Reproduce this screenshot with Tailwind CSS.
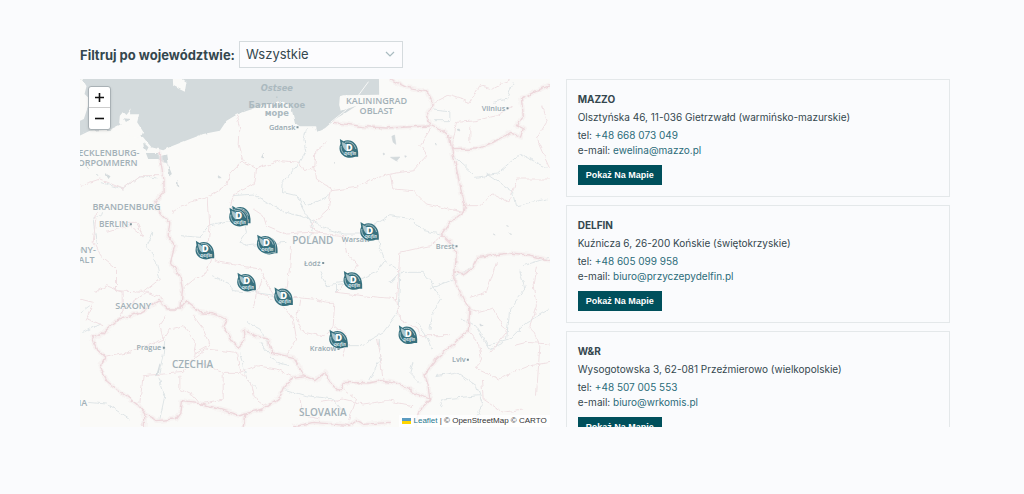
<!DOCTYPE html>
<html lang="pl">
<head>
  <meta charset="UTF-8">
  <meta name="viewport" content="width=device-width, initial-scale=1.0">
  <title>Dealerzy</title>
  <script src="https://cdn.jsdelivr.net/npm/@tailwindcss/browser@4"></script>
</head>
<body class="bg-[#fafbfd] font-[Inter,sans-serif] text-[#34474e]">
  <main class="pt-[41px] pb-16 pl-20 pr-[74px]">

    <!-- Filter -->
    <div class="flex items-center gap-1">
      <label for="region" class="text-[13px] leading-5 font-bold">Filtruj po województwie:</label>
      <div class="relative w-[164px]">
        <select id="region" class="block w-full h-[27px] appearance-none border border-[#d5dbde] bg-white/40 pl-[6px] pr-6 text-[13px]">
          <option>Wszystkie</option>
          <option>warmińsko-mazurskie</option>
          <option>świętokrzyskie</option>
          <option>wielkopolskie</option>
        </select>
        <svg class="pointer-events-none absolute right-2 top-[10px] w-[10px] h-[7px]" viewBox="0 0 10 7" fill="none" stroke="#a9bbc0" stroke-width="1.2"><path d="M1 1l4 4 4-4"/></svg>
      </div>
    </div>

    <div class="mt-[11px] grid grid-cols-[55fr_45fr] gap-4">

      <!-- Map -->
      <section class="relative h-[348px] overflow-hidden bg-[#fafaf8]">
        <svg class="absolute inset-0 w-full h-full" viewBox="0 0 1410 1044" preserveAspectRatio="xMidYMid slice" fill="none" stroke-linejoin="round">
          <defs>
            <filter id="rough" x="-5%" y="-5%" width="110%" height="110%">
              <feTurbulence type="fractalNoise" baseFrequency="0.045" numOctaves="3" seed="4"/>
              <feDisplacementMap in="SourceGraphic" scale="15" xChannelSelector="R" yChannelSelector="G"/>
            </filter>
            <filter id="coast">
              <feTurbulence type="fractalNoise" baseFrequency="0.05" numOctaves="2" seed="8"/>
              <feDisplacementMap in="SourceGraphic" scale="8" xChannelSelector="R" yChannelSelector="G"/>
            </filter>
            <path id="borders" d="M237 215L245 260L252 300L253 340L225 370L235 395L270 430L265 470L285 500L272 550L300 590L308 630L303 690L320 668L360 700L400 705L440 720L430 745L460 790L475 805L495 785L490 755L540 775L565 780L575 820L640 835L660 865L672 890L705 905L735 880L750 910L780 935L790 910L870 912L900 905L960 915L1010 945L1050 960L1045 920L1035 885L1070 840L1120 795L1165 755L1170 690L1150 660L1125 610L1125 575L1130 520L1110 490L1085 465L1110 430L1150 400L1155 375L1145 340L1130 270L1115 210L1110 175L1080 150L1050 135L1040 110L1060 75L1040 35L980 25L930 0M760 130L850 143L920 147L1050 141M1115 212L1190 210L1240 190L1290 160L1322 175L1330 150L1310 140L1330 110L1325 60L1370 35L1410 20M1125 575L1150 585L1180 565L1195 535L1290 522L1350 528L1410 545M303 690L265 690L240 665L180 700L110 725L55 775L35 770L50 810L75 835L60 865L85 910L130 945L170 975L195 1005L230 1025L285 1020L300 1000L305 965L350 970L400 985L480 1010L495 1005L550 990L600 955L610 930L640 895L672 890M495 1005L490 1044M195 1005L193 1044M1050 960L1015 1000L1008 1044M640 1044L700 1030L810 1040L830 1025L850 1036L930 1030"/>
          </defs>

          <!-- Sea -->
          <g filter="url(#coast)">
            <path fill="#d3dadc" d="M-20 -20H897L898 47L790 49L780 52L778 78L783 96L830 80L800 100L770 118L735 148L712 158L708 142L660 142L645 132L640 110L632 76L600 66L560 76L500 96L470 107L440 125L420 155L370 165L300 192L270 204L250 214L215 205L190 175L150 155L125 135L90 152L30 155L-20 180Z"/>
            <path fill="#fafaf8" d="M279 0L300 -6L320 8L315 38L298 30L280 20ZM120 110L130 98L140 108L156 88L150 106L178 106L172 130L190 158L182 178L150 172L135 150L118 132ZM-20 5L8 0L20 22L14 45L30 60L22 90L12 120L-20 135Z"/>
            <path fill="#d3dadc" d="M198 222L235 222L240 232L262 226L266 252L250 250L235 240L205 240ZM190 190L206 205L200 216L192 205ZM262 250L276 285L268 292ZM132 118L150 120L140 132ZM75 282L92 292L86 300Z"/>
            <path fill="#d3dadc" d="M932 235L960 234L950 246ZM936 172L944 168L948 196L940 190ZM1130 152l8-2 2 6zM1200 735l10 4-8 2zM293 305l4 20-5-2zM415 290l9 6-8 1zM910 222l5 3-4 3zM975 230l5 2-4 3zM1288 460l3 8zM1240 465l6 3zM1280 440l6 2zM760 250l4 3zM1068 192l5 4-5 2zM240 855l-10 35 5-2zM545 235l6-12 0 14zM20 262l6 7zM50 285l4 5z" stroke="#d3dadc" stroke-width="2"/>
          </g>
          <path d="M752 130L800 92L835 50L866 8" stroke="#f7f8f7" stroke-width="3"/>

          <!-- Rivers -->
          <g filter="url(#rough)" stroke="#dfe5e7" stroke-width="3">
            <path d="M680 148L672 180L678 220L660 250L610 310L608 340L650 350L680 380L750 350M460 350L520 345L560 370L620 400L690 420L740 450L790 465L850 465L880 440L930 410L1000 420L1030 455L1085 465M895 480L905 520L915 545L960 580L1030 580L1060 620L1085 660L1060 700L1050 750M915 545L890 580L840 600L770 610L770 640M960 580L955 700L910 760L840 800L780 800M303 470L360 475L390 440L440 430L490 420L500 460L480 490L500 500L620 490M400 590L450 615L460 635L520 640L590 650L640 660M1050 630L1120 600L1180 560M1120 230L1190 295L1250 285L1320 225L1400 265M1010 730L1040 770L1055 810M960 580L930 610M1000 850L990 880L1020 910M70 400L40 420L50 500M60 310L130 330L180 290L230 300M220 460L200 500L230 550L240 600M60 735L10 760M2 700L30 680M255 780L250 830L235 890L255 950L240 1020M25 970L80 975L150 1020M480 820L500 900L530 930M540 790L590 850L630 860M575 810L540 750L500 730M870 900L900 840L895 780M1070 890L1130 880L1190 920L1210 980L1180 1030M1080 990L1090 960L1200 950M1190 750L1220 800L1290 780L1340 730L1410 690M1320 575L1335 630L1290 690L1280 780M1330 560L1410 535M610 930L680 950L760 960L800 1010M650 350L700 440L690 480M1240 70L1280 60L1300 10M1060 90L1110 95L1110 125L1060 125M1220 285L1300 340L1310 380L1400 360M1140 720L1190 740L1230 810L1270 790M720 580L740 620L830 610"/>
          </g>

          <!-- Provinces -->
          <g filter="url(#rough)" stroke="#f0e0e3" stroke-width="3">
            <path d="M470 107L480 150L478 200L490 245L450 285L440 320L385 355L330 370L275 400M490 250L530 270L600 245L660 250L670 275L705 265L708 215L740 190M705 265L710 300L755 330L745 390L690 440L720 465M530 270L525 310L460 350L450 390M520 390L550 410L560 440L620 465L690 460L790 470L800 520L835 560L810 600L770 640M755 335L830 325L880 300L930 285L1000 275L1040 230L1020 200L1055 145M930 285L940 330L1000 335L1040 375L1150 400M385 355L390 450L380 530L420 550L540 570L570 630L590 660M310 630L360 590L380 580L400 530M620 640L630 560L635 500M520 690L530 640L545 600M660 660L650 720L670 760L730 770L760 740L765 670L740 670L700 660L640 655M770 640L850 650L950 660L955 600L960 520L1050 500L1085 470M765 740L800 770L790 830M950 660L960 720L1010 750L1020 770L1110 770M890 780L900 830L910 905M110 730L130 690L200 640L250 660M45 640L80 620L130 640L130 690M50 400L40 490L60 530L110 570L110 635L190 640L240 600M80 460L150 440L190 470L170 430L110 430M0 320L60 300L130 330L180 290L250 290M75 835L150 820L250 780L270 750L310 740L350 790L345 830L310 880L190 890L180 970M250 780L240 740L260 710M345 835L380 810L470 820L480 880L430 880L360 850M430 880L430 960L360 975L340 950L300 930L300 890M340 710L370 750L390 800L345 825M480 880L510 910L520 950L560 980L600 955M480 880L530 860L590 870L640 895M660 960L670 1010L720 1020M720 970L790 960L850 975L920 965L1000 980M805 1030L830 960L790 930M1115 210L1130 130L1190 125L1250 110L1300 80M1060 75L1110 50L1170 70L1200 20L1240 30L1290 0M1170 140L1170 190M1385 80L1400 130L1370 180L1410 270M1155 380L1200 380L1240 345L1290 370L1310 300L1410 300M1170 690L1200 700L1240 690L1280 760L1230 820M1170 655L1220 640L1250 550M1165 755L1195 790L1205 840L1190 870L1260 900L1300 880L1350 860L1410 850M1300 800L1340 790L1410 795M1370 560L1360 620L1370 680L1350 740L1380 800L1370 950M1205 900L1210 960L1270 1000L1330 990M530 640L600 670L640 720L650 780L620 830M0 660L40 670L20 720L70 740"/>
          </g>

          <!-- Country borders -->
          <g filter="url(#rough)">
            <use href="#borders" stroke="#f4eced" stroke-width="14" opacity=".55"/>
            <use href="#borders" stroke="#edd7db" stroke-width="4"/>
          </g>

          <!-- Labels -->
          <g font-family="'Open Sans', sans-serif" font-weight="600" font-size="24" fill="#a2b0b7" stroke="#fafaf8" stroke-width="3" paint-order="stroke" text-anchor="middle">
            <g stroke="none" fill="#abb9bf" font-family="'DejaVu Sans', sans-serif">
              <text x="591" y="36" font-style="italic" font-size="25">Ostsee</text>
              <text x="591" y="60" font-size="16">·</text>
              <text x="591" y="87" font-weight="700" font-size="25">Балтийское</text>
              <text x="591" y="112" font-weight="700" font-size="25">море</text>
            </g>
            <text x="890" y="76" font-size="27">KALININGRAD</text>
            <text x="890" y="106" font-size="27">OBLAST</text>
            <text x="179" y="231" font-size="27" text-anchor="end">MECKLENBURG-</text>
            <text x="173" y="262" font-size="27" text-anchor="end">VORPOMMERN</text>
            <text x="140" y="394" font-size="27">BRANDENBURG</text>
            <text x="101" y="444" font-size="25">BERLIN</text>
            <text x="48" y="523" font-size="27" text-anchor="end">SAXONY-</text>
            <text x="44" y="552" font-size="27" text-anchor="end">ANHALT</text>
            <text x="160" y="689" font-size="27">SAXONY</text>
            <text x="699" y="494" font-size="30">POLAND</text>
            <text x="338" y="867" font-size="30">CZECHIA</text>
            <text x="729" y="1012" font-size="30">SLOVAKIA</text>
            <text x="22" y="981" text-anchor="end" font-size="27">BAVARIA</text>
            <g fill="#98a9b1" font-size="22">
              <text x="607" y="153">Gdansk</text>
              <text x="1241" y="97">Vilnius</text>
              <text x="828" y="488">Warsaw</text>
              <text x="697" y="560">Łódź</text>
              <text x="1096" y="510">Brest</text>
              <text x="207" y="813">Prague</text>
              <text x="730" y="817">Krakow</text>
              <text x="1137" y="850">Lviv</text>
            </g>
          </g>
          <path fill="#7f949d" d="M650 142h6v6h-6zM1280 85h6v6h-6zM150 433h6v6h-6zM727 549h6v6h-6zM1127 499h6v6h-6zM249 803h6v6h-6zM773 807h6v6h-6zM1161 839h6v6h-6z"/>

          <!-- Pins -->
          <defs>
            <g id="pin">
              <path fill="#37717f" stroke="#fafaf8" stroke-width="2" paint-order="stroke" d="M2 -1L13 6C31 -3 50 8 55 27Q58 38 57 52L48 52C27 61 2 50 1 28Q1 18 4 13Z"/>
              <path stroke="#dbe7e9" stroke-width="2" d="M6 20C4 33 12 45 24 49M17 9C33 4 46 14 50 29"/>
              <path fill="#a9c3c9" d="M8 8C16 12 22 13 23 20L22 35C13 30 9 20 8 8Z"/>
              <text x="30" y="34" text-anchor="middle" font-family="Inter, sans-serif" font-size="27" font-weight="900" fill="#fff">D</text>
              <text x="33" y="47" text-anchor="middle" font-family="Inter, sans-serif" font-size="12" font-style="italic" font-weight="800" fill="#dbe7e9">Delfin</text>
            </g>
          </defs>
          <use href="#pin" x="778" y="181"/>
          <use href="#pin" x="455" y="381"/>
          <use href="#pin" x="447" y="387"/>
          <use href="#pin" x="536" y="471"/>
          <use href="#pin" x="530" y="468"/>
          <use href="#pin" x="346" y="486"/>
          <use href="#pin" x="840" y="430"/>
          <use href="#pin" x="471" y="582"/>
          <use href="#pin" x="582" y="626"/>
          <use href="#pin" x="790" y="577"/>
          <use href="#pin" x="747" y="753"/>
          <use href="#pin" x="955" y="740"/>
        </svg>

        <!-- Zoom -->
        <div class="absolute left-2 top-[7px] w-[23px] rounded-[3px] border border-[#a9b1b5] bg-white shadow-sm">
          <button aria-label="Przybliż" class="flex w-full h-[21px] items-center justify-center border-b border-[#ccc]">
            <svg class="w-[9px] h-[9px]" viewBox="0 0 9 9" stroke="#111" stroke-width="1.6"><path d="M0 4.5h9M4.5 0v9"/></svg>
          </button>
          <button aria-label="Oddal" class="flex w-full h-[21px] items-center justify-center">
            <svg class="w-[9px] h-[9px]" viewBox="0 0 9 9" stroke="#111" stroke-width="1.6"><path d="M0 4.5h9"/></svg>
          </button>
        </div>

        <div class="absolute right-0 bottom-0 flex items-center bg-white/80 px-[3px] font-['Liberation_Sans',Arial,sans-serif] text-[8px] leading-3 text-[#333]">
          <a href="#" class="flex items-center gap-[2px] text-[#27788f]">
            <svg class="w-[9px] h-[6px]" viewBox="0 0 9 6"><path fill="#5b9bc0" d="M0 0h9v3H0z"/><path fill="#ffd500" d="M0 3h9v3H0z"/></svg>
            Leaflet
          </a>
          <span class="whitespace-pre"> | © OpenStreetMap © CARTO</span>
        </div>
      </section>

      <!-- Dealers -->
      <section class="h-[348px] overflow-hidden space-y-2 text-[10px] leading-4">
        <article class="border border-[#e4e8ea] p-[11px]">
          <h3 class="font-bold">MAZZO</h3>
          <p class="mt-[2px]">Olsztyńska 46, 11-036 Gietrzwałd (warmińsko-mazurskie)</p>
          <p class="mt-[3px] leading-[15px]">tel: <a href="tel:+48668073049" class="text-[#2a6b79]">+48 668 073 049</a></p>
          <p class="leading-[15px]">e-mail: <a href="mailto:ewelina@mazzo.pl" class="text-[#2a6b79]">ewelina@mazzo.pl</a></p>
          <button class="mt-[7px] block h-5 bg-[#00505c] px-2 font-['Liberation_Sans',Arial,sans-serif] text-[9px] font-bold text-white">Pokaż Na Mapie</button>
        </article>
        <article class="border border-[#e4e8ea] p-[11px]">
          <h3 class="font-bold">DELFIN</h3>
          <p class="mt-[2px]">Kuźnicza 6, 26-200 Końskie (świętokrzyskie)</p>
          <p class="mt-[3px] leading-[15px]">tel: <a href="tel:+48605099958" class="text-[#2a6b79]">+48 605 099 958</a></p>
          <p class="leading-[15px]">e-mail: <a href="mailto:biuro@przyczepydelfin.pl" class="text-[#2a6b79]">biuro@przyczepydelfin.pl</a></p>
          <button class="mt-[7px] block h-5 bg-[#00505c] px-2 font-['Liberation_Sans',Arial,sans-serif] text-[9px] font-bold text-white">Pokaż Na Mapie</button>
        </article>
        <article class="border border-[#e4e8ea] p-[11px]">
          <h3 class="font-bold">W&amp;R</h3>
          <p class="mt-[2px]">Wysogotowska 3, 62-081 Przeźmierowo (wielkopolskie)</p>
          <p class="mt-[3px] leading-[15px]">tel: <a href="tel:+48507005553" class="text-[#2a6b79]">+48 507 005 553</a></p>
          <p class="leading-[15px]">e-mail: <a href="mailto:biuro@wrkomis.pl" class="text-[#2a6b79]">biuro@wrkomis.pl</a></p>
          <button class="mt-[7px] block h-5 bg-[#00505c] px-2 font-['Liberation_Sans',Arial,sans-serif] text-[9px] font-bold text-white">Pokaż Na Mapie</button>
        </article>
      </section>
    </div>
  </main>
</body>
</html>
